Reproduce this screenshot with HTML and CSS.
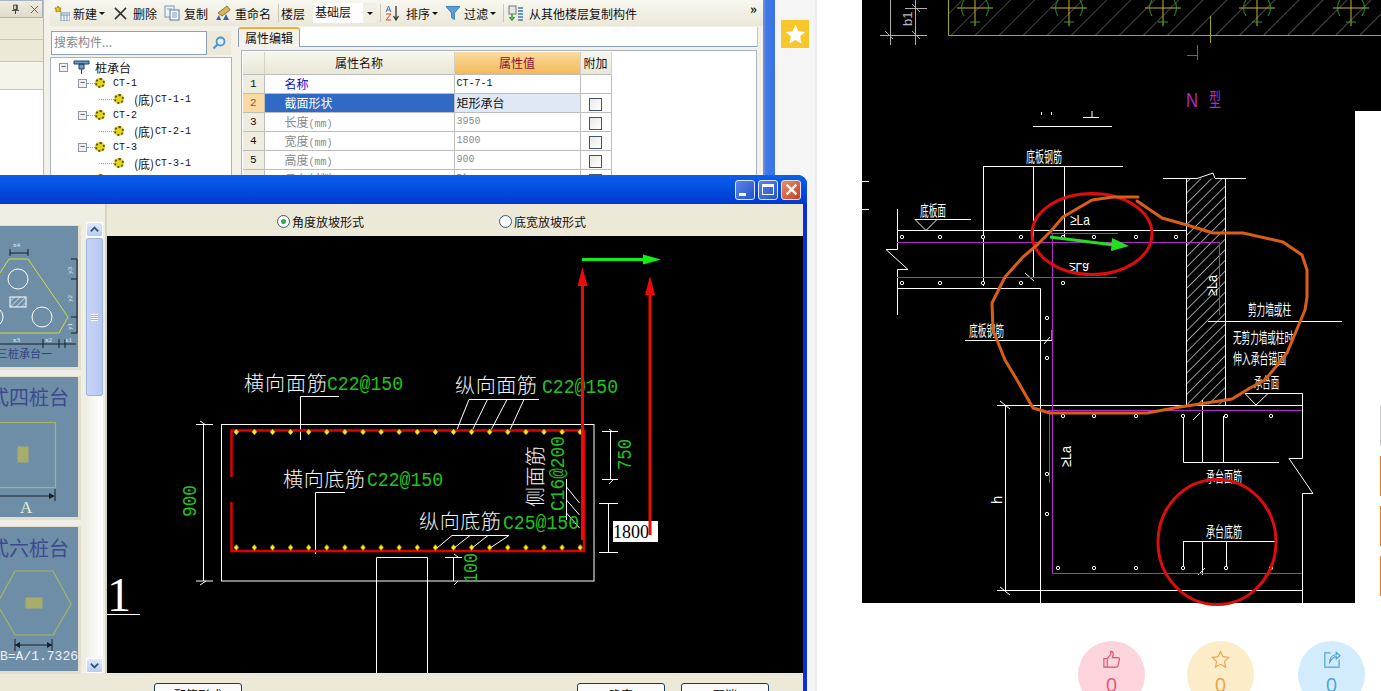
FILE: index.html
```html
<!DOCTYPE html>
<html lang="zh">
<head>
<meta charset="utf-8">
<title>桩承台</title>
<link rel="stylesheet" href="styles.css">
</head>
<body>
<div class="page">
  <section class="shot">
    <div class="app">
      <aside class="dock">
        <div class="dock-title"><svg class="pin" viewBox="0 0 10 12"><path d="M3 1h4v5H3zM1 7h8M5 7v4M6 1v5" /></svg><svg class="dock-x" viewBox="0 0 10 10"><path d="M1 1l8 8M9 1l-8 8"/></svg></div>
        <div class="dock-tab"></div>
        <div class="dock-tab"></div>
        <div class="dock-tab light"></div>
        <div class="dock-body"></div>
      </aside>
      <div class="content">
        <div class="toolbar">
          <svg class="ti" viewBox="0 0 16 16"><path fill="#f5c518" stroke="#a98a10" d="M4 1l1 2 2 0-1 2 1 2-3-1-2 1 0-2-1-2 2 0z"/><rect x="7" y="8" width="9" height="8" fill="#fff" stroke="#6f8db5"/><path d="M7 10h9M10 10v6M13 10v6" stroke="#6f8db5"/></svg>
          <span class="tl">新建</span><span class="caret"></span>
          <svg class="ti tx" viewBox="0 0 14 14"><path d="M1 1l12 12M13 1L1 13" stroke="#333" stroke-width="1.700"/></svg>
          <span class="tl">删除</span>
          <svg class="ti ts" viewBox="0 0 16 16"><rect x="1" y="1" width="9" height="11" fill="#eef3fa" stroke="#7c94b8"/><rect x="6" y="5" width="9" height="10" fill="#fff" stroke="#4f74a8"/><path d="M8 8h5M8 10h5M8 12h5M3 4h5" stroke="#7c94b8"/></svg>
          <span class="tl">复制</span>
          <svg class="ti ts" viewBox="0 0 16 16"><path d="M3 8l9-7 3 4-8 6z" fill="#d9b45a" stroke="#8f7430"/><path d="M1 15l3-5 2 5zM8 15l3-6 3 6z" fill="#3c62a8"/></svg>
          <span class="tl">重命名</span>
          <span class="sep"></span>
          <span class="tl">楼层</span>
          <span class="combo">基础层</span><span class="combo-btn"><span class="caret"></span></span>
          <span class="sep"></span>
          <svg class="ti" viewBox="0 0 16 16"><path class="az-a" d="M1 7L3.500 1 6 7M2 5h3"/><path class="az-z" d="M1 9h5L1 15h5"/><path d="M11 1v13M8.500 11l2.500 4 2.500-4" stroke="#333" fill="none" stroke-width="1.300"/></svg>
          <span class="tl">排序</span><span class="caret"></span>
          <svg class="ti ts2" viewBox="0 0 15 16"><path d="M0 1h15L9 8v7L6 13V8z" fill="#5a9fdc" stroke="#3a78b5"/></svg>
          <span class="tl">过滤</span><span class="caret"></span>
          <span class="sep"></span>
          <svg class="ti" viewBox="0 0 16 16"><rect x="1" y="1" width="7" height="8" fill="#e6e6e6" stroke="#777"/><path d="M4 9v4M1.500 12L4 15l2.500-3" stroke="#2b9a3a" fill="none" stroke-width="1.500"/><path d="M10 3h5M10 6h5M10 9h5M10 12h5M10 15h5" stroke="#4575ad" stroke-width="1.500"/></svg>
          <span class="tl">从其他楼层复制构件</span>
          <span class="more">»</span>
        </div>
        <div class="panes">
          <div class="tree-col">
            <div class="search">
              <span class="search-input">搜索构件...</span>
              <span class="search-btn"><svg viewBox="0 0 14 14"><circle cx="8.500" cy="5.500" r="4" fill="#dff0fb" stroke="#4a96cf" stroke-width="1.800"/><path d="M5.500 8.500L1.500 12.500" stroke="#4a96cf" stroke-width="2.200"/></svg></span>
            </div>
            <ul class="tree">
              <li class="n0"><span class="ex">−</span><svg class="cap" viewBox="0 0 17 16"><path d="M1 2h15v3H1zM6 5h5v5H6zM8.500 10v5" fill="#6d9ccc" stroke="#1f3f66"/></svg><span>桩承台</span></li>
              <li class="n1"><span class="ex">−</span><span class="dash"></span><span class="gear"></span><span class="lat">CT-1</span></li>
              <li class="n2"><span class="dash long"></span><span class="gear"></span><span class="par">(底)</span><span class="lat">CT-1-1</span></li>
              <li class="n1"><span class="ex">−</span><span class="dash"></span><span class="gear"></span><span class="lat">CT-2</span></li>
              <li class="n2"><span class="dash long"></span><span class="gear"></span><span class="par">(底)</span><span class="lat">CT-2-1</span></li>
              <li class="n1"><span class="ex">−</span><span class="dash"></span><span class="gear"></span><span class="lat">CT-3</span></li>
              <li class="n2"><span class="dash long"></span><span class="gear"></span><span class="par">(底)</span><span class="lat">CT-3-1</span></li>
              <li class="n1"><span class="ex">−</span><span class="dash"></span><span class="gear"></span><span class="lat">CT-4</span></li>
            </ul>
          </div>
          <div class="prop-col">
            <div class="tabs"><span class="tab">属性编辑</span></div>
            <div class="grid-box">
              <table class="grid">
                <colgroup><col class="c0"><col class="c1"><col class="c2"><col class="c3"></colgroup>
                <tr class="head"><th></th><th>属性名称</th><th class="active">属性值</th><th>附加</th></tr>
                <tr><td class="num">1</td><td class="name blue">名称</td><td class="val lat">CT-7-1</td><td class="chk"></td></tr>
                <tr class="sel"><td class="num">2</td><td class="name">截面形状</td><td class="val">矩形承台</td><td class="chk"><span class="box"></span></td></tr>
                <tr class="off"><td class="num">3</td><td class="name">长度<span class="lat">(mm)</span></td><td class="val lat">3950</td><td class="chk"><span class="box"></span></td></tr>
                <tr class="off"><td class="num">4</td><td class="name">宽度<span class="lat">(mm)</span></td><td class="val lat">1800</td><td class="chk"><span class="box"></span></td></tr>
                <tr class="off"><td class="num">5</td><td class="name">高度<span class="lat">(mm)</span></td><td class="val lat">900</td><td class="chk"><span class="box"></span></td></tr>
                <tr class="off"><td class="num">6</td><td class="name">承台材料</td><td class="val">砼</td><td class="chk"><span class="box"></span></td></tr>
              </table>
            </div>
          </div>
        </div>
      </div>
      <div class="edge"></div>
      <div class="side"><span class="star"><svg viewBox="0 0 20 20"><path d="M10 1l2.800 6 6.400.700-4.800 4.300 1.400 6.500L10 15.200 4.200 18.500l1.400-6.500L.8 7.700 7.200 7z"/></svg></span></div>
    </div>

    <div class="dialog">
      <div class="titlebar">
        <span class="wbtn"><span class="w-min"></span></span>
        <span class="wbtn"><span class="w-max"></span></span>
        <span class="wbtn close"><svg viewBox="0 0 12 12"><path d="M1.500 1.500l9 9M10.500 1.500l-9 9"/></svg></span>
      </div>
      <div class="dlg-body">
        <div class="dlg-mid">
          <div class="list">
            <div class="cards">
              <svg class="card c-a" viewBox="0 0 78 141">
                <defs><pattern id="h-th" patternUnits="userSpaceOnUse" width="4" height="4" patternTransform="rotate(45)"><path d="M0 0V4" stroke="#fff"/></pattern></defs>
                <polyline class="ln-y" points="0,47 9,33 28,33 68,91 59,107 0,107"/>
                <circle class="ln-w" cx="18" cy="53" r="10"/><circle class="ln-w" cx="42" cy="91" r="10"/><circle class="ln-w" cx="-7" cy="91" r="10"/>
                <rect class="hatch-w" x="10" y="71" width="16" height="10"/>
                <path class="ln-k" d="M10 27h18M10 23v7M28 23v7M71 33h6M71 53h6M71 91h6M71 107h6M77 33v74M0 118h76M43 113v9M59 113v9M65 113v9"/>
                <text class="t-mini" x="13" y="21">x4</text>
                <text class="t-mini" x="13" y="116">x3</text><text class="t-mini" x="45" y="116">x2</text><text class="t-mini" x="65" y="116">x1</text>
                <text class="t-mini" transform="translate(72 48) rotate(-90)">y3</text>
                <text class="t-mini" transform="translate(72 76) rotate(-90)">y2</text>
                <text class="t-mini" transform="translate(72 104) rotate(-90)">y1</text>
                <text class="t-cap" x="-3" y="132">三桩承台一</text>
              </svg>
              <svg class="card c-b" viewBox="0 0 78 140">
                <text class="t-title" x="-11" y="28">式四桩台</text>
                <rect class="ln-g" x="-2" y="45.500" width="57.500" height="65"/>
                <rect class="hatch-g" x="18" y="70" width="10" height="15"/>
                <path class="ln-k" d="M0 119h52M55 112v12"/><path class="fill-k" d="M49 116l6 3-6 3z"/>
                <text class="t-a" x="20" y="136">A</text>
              </svg>
              <svg class="card c-c" viewBox="0 0 78 144">
                <text class="t-title" x="-11" y="29">式六桩台</text>
                <polygon class="ln-g" points="15,44 53,44 71,77 53,108 15,108 -3,77"/>
                <rect class="hatch-g" x="26" y="71" width="16" height="10"/>
                <path class="ln-k" d="M15 118h37M15 112v12M52 112v12"/><path class="fill-k" d="M15 118l5-3v6zM52 118l-5-3v6z"/>
                <text class="t-b" x="78" y="133" text-anchor="end">B=A/1.7326</text>
              </svg>
            </div>
            <div class="vscroll">
              <span class="sb-btn"><svg viewBox="0 0 12 12"><path d="M2 8l4-4 4 4"/></svg></span>
              <span class="sb-thumb"><span class="grip"></span></span>
              <span class="sb-track"></span>
              <span class="sb-btn"><svg viewBox="0 0 12 12"><path d="M2 4l4 4 4-4"/></svg></span>
            </div>
          </div>
          <div class="work">
            <div class="radios">
              <label class="radio"><span class="dot on"></span>角度放坡形式</label>
              <label class="radio"><span class="dot"></span>底宽放坡形式</label>
            </div>
            <svg class="cad" viewBox="107 236 696 437">
              <defs>
                <pattern id="rebar" patternUnits="userSpaceOnUse" x="232" y="428" width="18.100" height="8">
                  <polygon points="4.300,1 6.800,4 4.300,7 1.800,4" fill="#fff21a"/>
                </pattern>
                <pattern id="rebar2" patternUnits="userSpaceOnUse" x="232" y="543.500" width="18.100" height="8">
                  <polygon points="4.300,1 6.800,4 4.300,7 1.800,4" fill="#fff21a"/>
                </pattern>
              </defs>
              <rect x="107" y="236" width="696" height="437" fill="#000"/>
              <g class="w1">
                <rect x="221.500" y="424.500" width="372.500" height="156.500"/>
                <path d="M203.500 424v157M196 424.500h17M196 581h17M206 425l-6-4M206 581l-6 4"/>
                <path d="M300.500 440v-43.500H339M469 399.500h70M469 399.500L456 432M487.500 399.500L471.500 432M507 399.500L490 432M524 399.500L509 432"/>
                <path d="M315.500 554v-61.500H345M452 535.500h57M452 535.500L437 548M470 535.500L454 548M488 535.500L472 548M509 535.500L490 548"/>
                <path d="M566.500 479v41M566.500 487l13 16M566.500 500l13 15M566.500 513l13 15"/>
                <path d="M376.500 673V557.500h51V673"/>
                <path d="M453.500 557v24M445 557.500h17M458 557l-4-3M458 581l-4 4"/>
                <path d="M610.500 431v48M602 431.500h16M602 479.500h16M613 432l-4-3M613 480l-4 4"/>
                <path d="M608.500 503v50M599 503.500h19M599 552.500h19"/>
                <path d="M107 614.500h33"/>
              </g>
              <text class="cad-n" x="107" y="611">1</text>
              <text class="cad-w" x="244" y="391" textLength="83">横向面筋</text>
              <text class="cad-g" x="327" y="390" textLength="76" lengthAdjust="spacingAndGlyphs">C22@150</text>
              <text class="cad-w" x="455" y="393" textLength="82">纵向面筋</text>
              <text class="cad-g" x="542" y="393" textLength="76" lengthAdjust="spacingAndGlyphs">C22@150</text>
              <text class="cad-w" x="283" y="487" textLength="82">横向底筋</text>
              <text class="cad-g" x="367" y="486" textLength="76" lengthAdjust="spacingAndGlyphs">C22@150</text>
              <text class="cad-w" x="419" y="529" textLength="82">纵向底筋</text>
              <text class="cad-g" x="503" y="529" textLength="76" lengthAdjust="spacingAndGlyphs">C25@150</text>
              <text class="cad-w" transform="translate(543 507) rotate(-90)" textLength="61">侧面筋</text>
              <text class="cad-g" transform="translate(564 511) rotate(-90)" textLength="75" lengthAdjust="spacingAndGlyphs">C16@200</text>
              <text class="cad-g" transform="translate(196 517) rotate(-90)" textLength="32" lengthAdjust="spacingAndGlyphs">900</text>
              <text class="cad-g" transform="translate(631 470) rotate(-90)" textLength="31" lengthAdjust="spacingAndGlyphs">750</text>
              <text class="cad-g" transform="translate(477 583) rotate(-90)" textLength="30" lengthAdjust="spacingAndGlyphs">100</text>
              <path class="red" d="M231.500 477v-46.500h352.500M231.500 502v49h352.500V430"/>
              <rect x="232" y="428" width="360" height="8" fill="url(#rebar)"/>
              <rect x="232" y="543.500" width="360" height="8" fill="url(#rebar2)"/>
              <rect class="inp" x="613" y="521" width="45" height="21"/>
              <text class="inp-t" x="613" y="537.500">1800</text>
              <path class="red-b" d="M582.500 285V540M650 295V535"/>
              <path class="fill-r" d="M582.500 267l5 19h-10zM650 276l5 19h-10z"/>
              <path class="green-b" d="M582 259.500h62"/>
              <path class="fill-gr" d="M661 259.500l-18-5v10z"/>
            </svg>
          </div>
        </div>
        <div class="dlg-foot">
          <span class="btn b1">配筋形式</span>
          <span class="btn b2">确定</span>
          <span class="btn b3">取消</span>
        </div>
      </div>
    </div>
  </section>

  <main class="article">
    <svg class="drawing" viewBox="862 0 519 610">
      <defs>
        <pattern id="h-top" patternUnits="userSpaceOnUse" width="17" height="17" patternTransform="rotate(45)"><path d="M0 0V17" stroke="#8a8a8a" stroke-width="1"/></pattern>
        <pattern id="h-wall" patternUnits="userSpaceOnUse" width="7.500" height="10" patternTransform="rotate(45)"><path d="M0 0V10" stroke="#fff" stroke-width="1.200"/></pattern>
        <circle id="rb" r="1.700" fill="#000" stroke="#fff" stroke-width="1"/>
      </defs>
      <path fill="#000" d="M862 0H1381V111H1355V603H862z"/>
      <!-- top band -->
      <rect x="948" y="0" width="433" height="35" fill="url(#h-top)"/>
      <path class="ol" d="M948.500 0V35.500H1381"/>
      <g class="cross">
        <path class="yl" d="M957 8h36M975 0v26M1051 8h36M1069 0v26M1145 8h36M1163 0v26M1239 8h36M1257 0v26M1333 8h36M1351 0v26"/>
        <path class="gn" d="M964 0a14 14 0 0 0 0 16M986 0a14 14 0 0 1 0 16M970 22h10M1058 0a14 14 0 0 0 0 16M1080 0a14 14 0 0 1 0 16M1064 22h10M1152 0a14 14 0 0 0 0 16M1174 0a14 14 0 0 1 0 16M1158 22h10M1246 0a14 14 0 0 0 0 16M1268 0a14 14 0 0 1 0 16M1252 22h10M1340 0a14 14 0 0 0 0 16M1362 0a14 14 0 0 1 0 16M1346 22h10"/>
        <path class="ol" d="M1210.500 16v27"/>
      </g>
      <path class="gy" d="M890.500 0v45M915.500 0v45M905 8.500h22M880 35.500h47M912 4l8 8M912 31l8 8M885 31l8 8"/>
      <text class="d-gy" transform="translate(912 26) rotate(-90)">b1</text>
      <path class="mg" d="M1197.500 45v15M1187 55.500h10"/>
      <text class="d-mg" x="1186" y="107" textLength="12" lengthAdjust="spacingAndGlyphs">N</text>
      <text class="d-mgc" x="1209" y="107" textLength="12" lengthAdjust="spacingAndGlyphs">型</text>
      <!-- structure -->
      <g class="wl">
        <path d="M1033 126.500h79M1041.500 112v3M1051.500 112v3M1083 117.500h16M1092 111v6"/>
        <path d="M983 166.500h140M983.500 166v120M1033.500 166v112M1064.500 166v72"/>
        <path d="M915 219.500h56M915 219.500L926 230.500L937 219.500"/>
        <path d="M897.500 209V249.500H886L908 269.500H897.500V315M897 230.500H1186M897 288.500H1040.500V603M1033 277.500H1064M1025 273l9 8"/>
        <path d="M862 181.500h7M862 209.500h7"/>
        <path d="M1163 178.500H1197L1213 173L1215 178.500H1246"/>
        <path d="M1186.500 178V405M1225.500 178V405"/>
        <path d="M1208 321.500H1342M965 340.500H1052M1050 337l-6 7M1052 330v10"/>
        <path d="M1245 393.500H1302.500V458.500H1289L1313 493.500H1302.500V603M1245 393.500L1256 405L1268 393.500"/>
        <path d="M997 405.500H1302M997 590.500H1302M1005.500 405V590M1000 401l10 8M1000 587l10 8"/>
        <path d="M1183.500 416V462.500H1279M1202.500 400V462M1223.500 416V462M1200 413l-7 7"/>
        <path d="M1183 541.500H1275M1183.500 541V569M1202.500 541V575M1226.500 541V569M1205 568l-7 7"/>
      </g>
      <rect x="1186.500" y="178.500" width="39" height="226" fill="url(#h-wall)"/>
      <path class="mg" d="M897 242.500H1219.500V315M897 277.500H1117M1051 233.500H1118M1052.500 233V573.500H1302M1048 410.500H1302M1049.500 410V483"/>
      <g>
        <use href="#rb" x="902" y="237"/><use href="#rb" x="940" y="237"/><use href="#rb" x="983" y="237"/><use href="#rb" x="1021" y="237"/><use href="#rb" x="1063" y="237"/><use href="#rb" x="1094" y="237"/><use href="#rb" x="1136" y="237"/><use href="#rb" x="1176" y="237"/>
        <use href="#rb" x="902" y="283"/><use href="#rb" x="940" y="283"/><use href="#rb" x="983" y="283"/><use href="#rb" x="1021" y="283"/><use href="#rb" x="1063" y="283"/>
        <use href="#rb" x="1047" y="318"/><use href="#rb" x="1047" y="358"/><use href="#rb" x="1047" y="474"/><use href="#rb" x="1047" y="514"/>
        <use href="#rb" x="1063" y="416"/><use href="#rb" x="1094" y="416"/><use href="#rb" x="1136" y="416"/><use href="#rb" x="1183" y="416"/><use href="#rb" x="1226" y="416"/><use href="#rb" x="1271" y="416"/>
        <use href="#rb" x="1058" y="568"/><use href="#rb" x="1094" y="568"/><use href="#rb" x="1136" y="568"/><use href="#rb" x="1183" y="568"/><use href="#rb" x="1226" y="568"/><use href="#rb" x="1271" y="568"/>
      </g>
      <text class="d-t" x="1026" y="162" textLength="36" lengthAdjust="spacingAndGlyphs">底板钢筋</text>
      <text class="d-t" x="920" y="216" textLength="26" lengthAdjust="spacingAndGlyphs">底板面</text>
      <text class="d-t" x="969" y="336" textLength="35" lengthAdjust="spacingAndGlyphs">底板钢筋</text>
      <text class="d-t" x="1248" y="315" textLength="43" lengthAdjust="spacingAndGlyphs">剪力墙或柱</text>
      <text class="d-t" x="1233" y="343" textLength="60" lengthAdjust="spacingAndGlyphs">无剪力墙或柱时</text>
      <text class="d-t" x="1233" y="364" textLength="53" lengthAdjust="spacingAndGlyphs">伸入承台锚固</text>
      <text class="d-t" x="1254" y="388" textLength="25" lengthAdjust="spacingAndGlyphs">承台面</text>
      <text class="d-t" x="1206" y="482" textLength="36" lengthAdjust="spacingAndGlyphs">承台面筋</text>
      <text class="d-t" x="1206" y="537" textLength="36" lengthAdjust="spacingAndGlyphs">承台底筋</text>
      <text class="d-la" x="1070" y="225" textLength="20" lengthAdjust="spacingAndGlyphs">≥La</text>
      <text class="d-la" transform="translate(1069 263) scale(1 -1)" textLength="20" lengthAdjust="spacingAndGlyphs">≥La</text>
      <text class="d-la" transform="translate(1217 296) rotate(-90)" textLength="21" lengthAdjust="spacingAndGlyphs">≥La</text>
      <text class="d-la" transform="translate(1071 467) rotate(-90)" textLength="21" lengthAdjust="spacingAndGlyphs">≥La</text>
      <text class="d-la" transform="translate(1002 504) rotate(-90)">h</text>
      <ellipse class="rd" cx="1092" cy="234" rx="60" ry="40.500"/>
      <ellipse class="rd" cx="1217" cy="542" rx="59" ry="62.500"/>
      <polyline class="or" points="1138,197 1113,197 1092,200 1063,217 1050,232 1037,245 1023,257 1005,277 998,291 992,303 993,330 1005,360 1017,380 1033,408 1050,413 1147,413 1180,407 1232,399 1250,388 1265,380 1287,353 1305,310 1307,297 1307,270 1302,255 1283,242 1243,233 1213,233 1187,225 1162,218 1137,201"/>
      <path class="ga" d="M1050 237L1114 245"/>
      <path class="gf" d="M1129 246L1112 238L1111 251z"/>
    </svg>
    <div class="actions">
      <div class="act a-like">
        <svg viewBox="0 0 20 20"><path d="M2 9h3.500v9H2zM5.500 9l3.700-4.500V1.500c2 0 3 1.500 2.500 3.500L11 8h6c1 0 1.500 1 1.300 1.800l-1.500 7c-.2.800-.8 1.200-1.500 1.200H5.500"/></svg>
        <span>0</span>
      </div>
      <div class="act a-star">
        <svg viewBox="0 0 20 20"><path d="M10 1.500l2.600 5.500 6 .8-4.400 4.200 1.100 6L10 15.100 4.700 18l1.100-6L1.400 7.800l6-.8z"/></svg>
        <span>0</span>
      </div>
      <div class="act a-note">
        <svg viewBox="0 0 20 20"><path d="M9 3H3v15h15v-8M8 13c0-5 3-8 7-8V2.500L19 6l-4 3.500V7c-3 .3-5 2.500-7 6z"/></svg>
        <span>0</span>
      </div>
    </div>
    <div class="rail"><i class="r0"></i><i></i><i></i><i></i></div>
  </main>
</div>
</body>
</html>
```
FILE: styles.css
```css
* { box-sizing: border-box; }
html, body { margin: 0; height: 100%; overflow: hidden; background: #fff; }
body { font: 12px "Noto Sans CJK SC", "Liberation Sans", sans-serif; color: #111; }
.page { display: flex; width: 1381px; height: 691px; overflow: hidden; position: relative; }

.shot { position: relative; width: 862px; flex: none; height: 691px; }
.app { display: flex; width: 817px; height: 691px; }

.dock { width: 44px; flex: none; display: flex; flex-direction: column; background: #ece9d8; border-right: 1px solid #bdb9a4; height: 176px; }
.dock-title { height: 18px; display: flex; justify-content: flex-end; align-items: center; gap: 10px; padding-right: 3px; background: linear-gradient(#efece0, #dfdccb); border: 1px solid #a9b4c3; border-left: 0; }
.pin { width: 9px; height: 11px; fill: none; stroke: #333; }
.dock-x { width: 9px; height: 9px; fill: none; stroke: #555; }
.dock-tab { height: 22px; background: #ece9d8; border-bottom: 1px solid #c9c5b2; }
.dock-tab.light { height: 28px; background: #f5f3ea; }
.dock-body { flex: 1; background: #fff; }

.content { width: 719px; flex: none; background: #f4f2e8; padding-left: 6px; height: 176px; overflow: hidden; }
.toolbar { height: 26px; display: flex; align-items: center; background: linear-gradient(#f8f7f0, #ebe8d9); white-space: nowrap; padding-left: 4px; position: relative; }
.ti { width: 16px; height: 16px; flex: none; }
.tx { width: 13px; height: 13px; margin: 0 3px 0 9px; }
.ts { margin: 0 1px 0 7px; }
.ts2 { width: 14px; margin: 0 1px 0 8px; }
.tl { margin-left: 3px; color: #111; }
.caret { display: inline-block; width: 0; height: 0; border: 3px solid transparent; border-top: 3px solid #111; border-bottom: 0; margin-left: 2px; }
.sep { width: 1px; height: 18px; background: #c9c6b4; margin: 0 2px 0 7px; flex: none; }
.sep + .tl { margin-left: 0; }
.sep + .ti { margin-left: 2px; margin-right: 2px; }
.combo { width: 50px; height: 20px; line-height: 18px; background: #fff; margin-left: 8px; padding-left: 2px; flex: none; }
.combo-btn { width: 13px; height: 20px; display: flex; align-items: center; justify-content: center; background: #f1efe4; flex: none; }
.combo-btn .caret { margin: 0; }
.combo-btn + .sep { margin-left: 4px; }
.more { position: absolute; right: 6px; top: 0; font-size: 13px; line-height: 18px; font-weight: 700; }
.az-a { fill: none; stroke: #4a6db0; stroke-width: 1; }
.az-z { fill: none; stroke: #c8552a; stroke-width: 1; }

.panes { display: flex; gap: 6px; height: 150px; }
.tree-col { width: 182px; flex: none; padding-top: 5px; }
.search { display: flex; height: 24px; margin-left: 1px; }
.search-input { width: 156px; border: 1px solid #8da2b5; background: #fff; color: #888; padding-left: 2px; line-height: 20px; }
.search-btn { width: 24px; display: flex; align-items: center; justify-content: center; background: #ece9d8; }
.search-btn svg { width: 14px; height: 14px; }
.tree { list-style: none; margin: 2px 0 0; padding: 1px 0 0; height: 120px; background: #fff; border: 1px solid #a9b4c3; overflow: hidden; }
.tree li { height: 16px; display: flex; align-items: center; white-space: nowrap; }
.n0 { padding-left: 8px; }
.n1 { padding-left: 27px; }
.n2 { padding-left: 48px; }
.ex { width: 9px; height: 9px; border: 1px solid #8c97a3; background: #eef0f2; font-size: 9px; line-height: 6px; text-align: center; flex: none; color: #222; }
.n0 .ex { margin-right: 5px; }
.cap { width: 17px; height: 16px; margin-right: 5px; flex: none; }
.dash { width: 8px; border-top: 1px dotted #999; flex: none; }
.dash.long { width: 15px; }
.gear { width: 10px; height: 10px; margin: 0 8px 0 0; border-radius: 50%; background: #e4d616; border: 2px dotted #5a4a10; flex: none; }
.n2 .gear { margin-right: 10px; }
.par { width: 21px; flex: none; }
.lat { font: 10px "Liberation Mono", monospace; }

.prop-col { flex: 1; min-width: 0; padding-top: 1px; }
.tabs { height: 20px; background: #fff; border-bottom: 1px solid #8da2b5; margin-right: 5px; border-right: 1px solid #c5c5c5; }
.tab { display: inline-block; width: 62px; height: 20px; line-height: 17px; background: #f4f2e8; border: 1px solid #8da2b5; border-top: 2px solid #f0ac35; border-bottom: 0; border-radius: 3px 3px 0 0; text-align: center; }
.grid-box { margin: 3px 6px 0 3px; height: 130px; background: #fff; border: 1px solid #a9b4c3; padding: 1px 0 0 1px; overflow: hidden; }
.grid { border-collapse: collapse; table-layout: fixed; width: 368px; }
.c0 { width: 21px; } .c1 { width: 190px; } .c2 { width: 126px; } .c3 { width: 31px; }
.grid th { height: 22px; font-weight: 400; background: linear-gradient(#f7f6ee, #e9e6d6); border-right: 1px solid #d4d1c2; text-align: center; padding: 0; }
.grid th.active { background: linear-gradient(#fbdca0, #f3b95a); color: #8a1233; }
.grid td { height: 19px; padding: 0; border: 1px solid #bdbdbd; border-left: 0; line-height: 16px; overflow: hidden; white-space: nowrap; }
.grid td:last-child { border-right: 1px solid #bdbdbd; }
.num { background: #efece0; text-align: center; font: 11px "Liberation Mono", monospace !important; }
.name { padding-left: 20px !important; }
.val { padding-left: 2px !important; }
.blue { color: #0a0ac0; }
.sel .num { background: #fbd9a3; color: #a14c1a; }
.sel .name { background: #316ac5; color: #fff; }
.sel .val { background: #dfe8f5; }
.off td { color: #8a8a8a; }
.off .num { color: #111; }
.chk { text-align: center; }
.box { display: inline-block; width: 13px; height: 13px; border: 1px solid #41566e; background: linear-gradient(135deg, #e9e9e2, #fff); vertical-align: middle; }

.edge { width: 12px; flex: none; background: linear-gradient(90deg, #7b8fd8, #3f78e6 30%, #3a72e4); }
.side { width: 42px; flex: none; background: #f5f5f5; border-right: 2px solid #ececec; padding: 20px 0 0 6px; }
.star { display: flex; width: 28px; height: 28px; background: #f7c72c; align-items: center; justify-content: center; }
.star svg { width: 21px; height: 21px; fill: #fff; }

.dialog { position: absolute; left: 0; top: 175px; width: 807px; height: 516px; background: #0831d9; border-radius: 0 9px 0 0; overflow: hidden; padding-right: 4px; }
.titlebar { height: 29px; margin-right: -4px; display: flex; justify-content: flex-end; align-items: center; gap: 3px; padding: 0 6px 0 0; background: linear-gradient(#0a62ea, #0a5ae8 12%, #0049dc 60%, #0138d0); }
.wbtn { width: 20px; height: 20px; border: 1px solid #dce6fb; border-radius: 3px; background: linear-gradient(135deg, #5a86e8, #2452c8); display: flex; align-items: center; justify-content: center; position: relative; }
.wbtn.close { background: linear-gradient(135deg, #e98a6a, #c8401c); }
.wbtn svg { width: 13px; height: 13px; stroke: #fff; stroke-width: 2.200; fill: none; }
.w-min { width: 7px; height: 3px; background: #fff; margin: 9px 6px 0 0; }
.w-max { width: 12px; height: 11px; border: 1px solid #fff; border-top-width: 3px; }
.dlg-body { height: 487px; background: #ece9d8; }
.dlg-mid { display: flex; height: 469px; }
.list { width: 107px; flex: none; display: flex; background: #f0eee2; border-right: 2px solid #d7d4c3; }
.cards { width: 86px; flex: none; display: flex; flex-direction: column; gap: 10px; padding-top: 22px; }
.card { display: block; width: 78px; flex: none; background: #6e8ea8; box-shadow: 1px 1px 0 2px #e2dfd0; }
.c-a { height: 141px; }
.c-b { height: 140px; }
.c-c { height: 144px; }
.vscroll { width: 17px; display: flex; flex-direction: column; height: 451px; margin-top: 18px; background: #fff; }
.sb-btn { height: 15px; flex: none; background: linear-gradient(#dfe9fb, #b8ccf3); border: 1px solid #fff; border-radius: 2px; display: flex; align-items: center; justify-content: center; }
.sb-btn svg { width: 11px; height: 11px; fill: none; stroke: #33527f; stroke-width: 2; }
.sb-thumb { height: 158px; margin-top: 1px; flex: none; background: linear-gradient(90deg, #c6d4f7, #b7c8f2); border: 1px solid #9fb3e0; border-radius: 2px; display: flex; align-items: center; justify-content: center; }
.grip { width: 7px; height: 7px; background: repeating-linear-gradient(#fff 0 1px, #9bb0e0 1px 2px); }
.sb-track { flex: 1; background: linear-gradient(90deg, #f0efe6, #fff); }

.work { width: 696px; flex: none; display: flex; flex-direction: column; }
.radios { height: 32px; display: flex; align-items: center; padding-left: 170px; gap: 135px; padding-top: 3px; }
.radio { display: flex; align-items: center; gap: 2px; }
.dot { width: 13px; height: 13px; border-radius: 50%; border: 1px solid #3a5a7a; background: #fff; display: flex; align-items: center; justify-content: center; }
.dot.on::after { content: ""; width: 5px; height: 5px; border-radius: 50%; background: #34a84a; }
.cad { display: block; width: 696px; height: 437px; flex: none; }
.dlg-foot { position: relative; height: 18px; display: flex; padding: 10px 0 0 154px; overflow: hidden; }
.btn { width: 88px; height: 24px; flex: none; border: 1px solid #1a3a5c; border-radius: 3px; background: #fafafa; text-align: center; line-height: 22px; }
.b2 { margin-left: 335px; }
.b3 { margin-left: 16px; }

/* thumbnails */
.ln-y { fill: none; stroke: #d9dc3a; stroke-width: 1; }
.ln-w { fill: none; stroke: #fff; stroke-width: 1; }
.ln-g { fill: none; stroke: #a5b46c; stroke-width: 1.200; }
.ln-k { fill: none; stroke: #152028; stroke-width: 1; }
.fill-k { fill: #152028; }
.hatch-w { fill: url(#h-th); stroke: #fff; }
.hatch-g { fill: #a9ad6a; stroke: #a9ad6a; }
.t-mini { font: 7px "Liberation Serif", serif; fill: #e6eef5; }
.t-cap { font: 11px "Noto Sans CJK SC", sans-serif; fill: #33427f; }
.t-title { font: 20px "Noto Sans CJK SC", sans-serif; fill: #3d4a8c; }
.t-a { font: 17px "Liberation Serif", serif; fill: #e6ecd8; }
.t-b { font: 13px "Liberation Mono", monospace; fill: #eef2f5; }

/* main cad */
.w1 { fill: none; stroke: #fff; stroke-width: 1; }
.cad-w { font: 300 20px "Noto Sans CJK SC", sans-serif; fill: #f4f4f4; }
.cad-g { font: 21px "Liberation Mono", monospace; fill: #1fc41f; }
.cad-n { font: 48px "Liberation Serif", serif; fill: #fff; }
.red { fill: none; stroke: #e00000; stroke-width: 2.500; }
.red-b { fill: none; stroke: #ee0a0a; stroke-width: 3; }
.fill-r { fill: #ee0a0a; }
.green-b { stroke: #11ee11; stroke-width: 3; fill: none; }
.fill-gr { fill: #11ee11; }
.inp { fill: #fff; }
.inp-t { font: 18px "Liberation Serif", serif; fill: #000; }

/* article */
.article { flex: 1; min-width: 0; position: relative; }
.drawing { display: block; width: 519px; height: 610px; overflow: visible; }
.ol { fill: none; stroke: #a8a800; stroke-width: 1; }
.yl { fill: none; stroke: #c8b428; stroke-width: 1; }
.gn { fill: none; stroke: #2c9c2c; stroke-width: 1; }
.gy { fill: none; stroke: #b0b0b0; stroke-width: 1; }
.mg { fill: none; stroke: #b42ac8; stroke-width: 1; }
.wl { fill: none; stroke: #fff; stroke-width: 1; }
.d-gy { font: 13px "Liberation Sans", sans-serif; fill: #b8b8b8; }
.d-mg { font: 20px "Liberation Sans", sans-serif; fill: #b42ac8; }
.d-mgc { font: 19px "Noto Sans CJK SC", sans-serif; fill: #b42ac8; }
.d-t { font: 15px "Noto Sans CJK SC", sans-serif; fill: #fff; }
.d-la { font: 15px "Liberation Sans", sans-serif; fill: #fff; }
.rd { fill: none; stroke: #dc0c10; stroke-width: 3; }
.or { fill: none; stroke: #d95e18; stroke-width: 3; stroke-linejoin: round; stroke-linecap: round; }
.ga { stroke: #22e01f; stroke-width: 3; fill: none; }
.gf { fill: #22e01f; }

.actions { display: flex; gap: 42px; padding-left: 216px; margin-top: 31px; }
.act { width: 67px; height: 67px; border-radius: 50%; flex: none; display: flex; flex-direction: column; align-items: center; padding-top: 9px; overflow: hidden; }
.act svg { width: 19px; height: 19px; fill: none; stroke-width: 1.200; flex: none; }
.act span { font: 20px/24px "Open Sans", "Liberation Sans", sans-serif; margin-top: 4px; }
.a-like { background: #fdd3dc; color: #e05a78; }
.a-like svg { stroke: #dc4f70; }
.a-star { background: #fdecc8; color: #dfa54a; }
.a-star svg { stroke: #e3a94f; }
.a-note { background: #d2ecfe; color: #4ba3e2; margin-left: 2px; }
.a-note svg { stroke: #4a9fdc; }

.rail { position: absolute; right: 0; top: 406px; width: 1px; display: flex; flex-direction: column; gap: 10px; }
.rail i { display: block; width: 1px; height: 40px; background: #f07a1e; }
.rail .r0 { background: #c8c8c8; }
```
